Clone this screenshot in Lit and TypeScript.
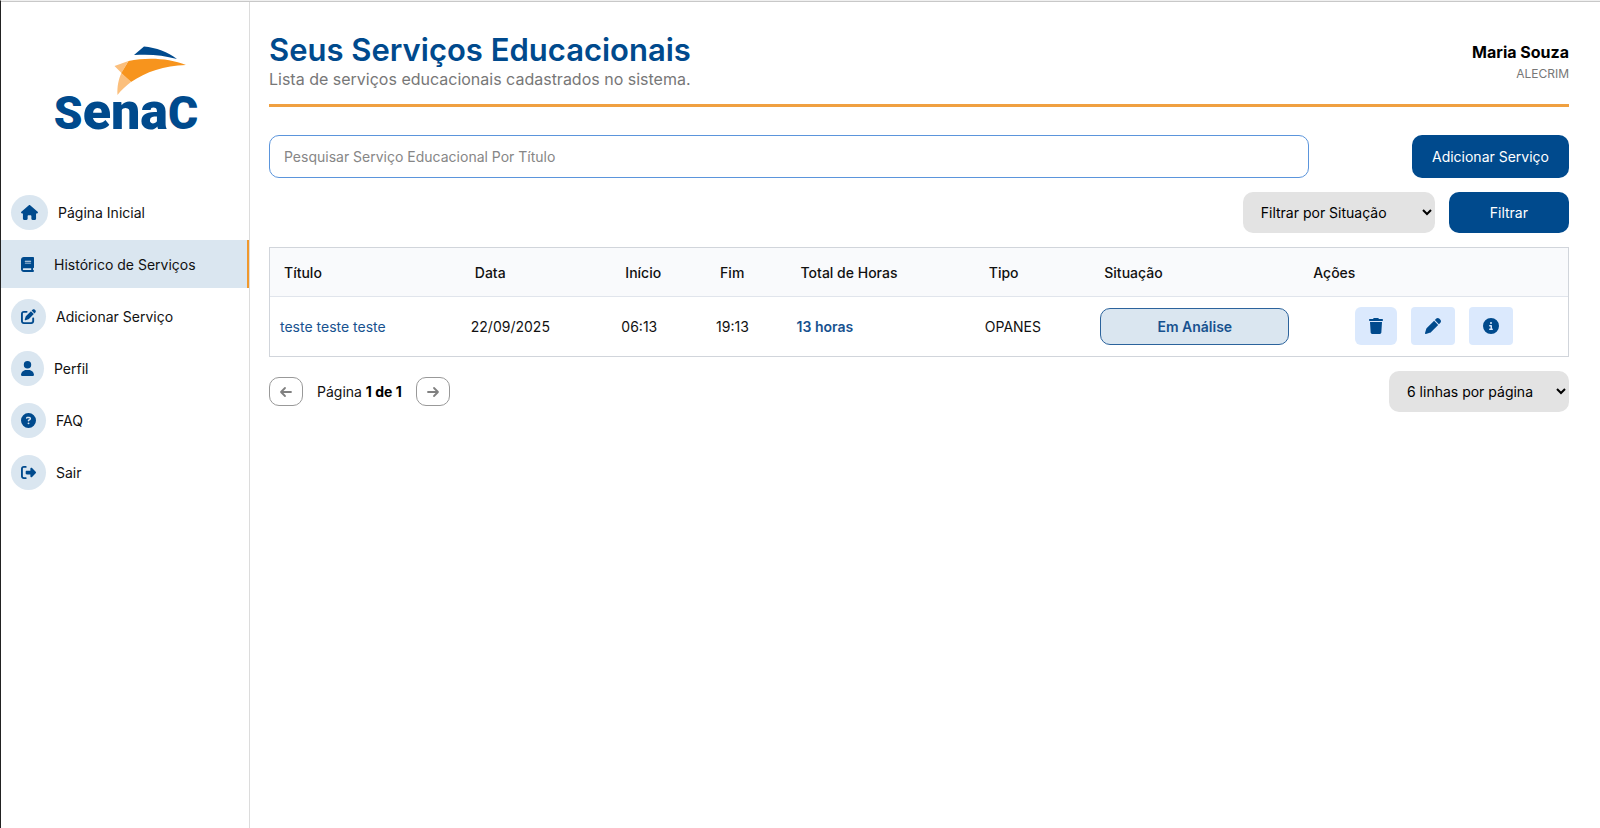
import { LitElement, html, svg, css } from "lit";
import { customElement, property, state } from "lit/decorators.js";

type Icon = { w: number; d: string };

const icons: Record<string, Icon> = {
  home: { w: 576, d: "M575.8 255.5c0 18-15 32.1-32 32.1l-32 0 .7 160.2c0 2.7-.2 5.4-.5 8.1l0 16.2c0 22.1-17.9 40-40 40l-16 0c-1.1 0-2.2 0-3.3-.1c-1.4 .1-2.8 .1-4.2 .1L416 512l-24 0c-22.1 0-40-17.9-40-40l0-24 0-64c0-17.7-14.3-32-32-32l-64 0c-17.7 0-32 14.3-32 32l0 64 0 24c0 22.1-17.9 40-40 40l-24 0-31.9 0c-1.5 0-3-.1-4.5-.2c-1.2 .1-2.4 .2-3.6 .2l-16 0c-22.1 0-40-17.9-40-40l0-112c0-.9 0-1.9 .1-2.8l0-69.7-32 0c-18 0-32-14-32-32.1c0-9 3-17 10-24L266.4 8c7-7 15-8 22-8s15 2 21 7L564.8 231.5c8 7 12 15 11 24z" },
  book: { w: 448, d: "M96 0C43 0 0 43 0 96L0 416c0 53 43 96 96 96l288 0 32 0c17.7 0 32-14.3 32-32s-14.3-32-32-32l0-64c17.7 0 32-14.3 32-32l0-320c0-17.7-14.3-32-32-32L384 0 96 0zm0 384l256 0 0 64L96 448c-17.7 0-32-14.3-32-32s14.3-32 32-32zm32-240c0-8.8 7.2-16 16-16l192 0c8.8 0 16 7.2 16 16s-7.2 16-16 16l-192 0c-8.8 0-16-7.2-16-16zm16 48l192 0c8.8 0 16 7.2 16 16s-7.2 16-16 16l-192 0c-8.8 0-16-7.2-16-16s7.2-16 16-16z" },
  edit: { w: 512, d: "M471.6 21.7c-21.9-21.9-57.3-21.9-79.2 0L362.3 51.7l97.9 97.9 30.1-30.1c21.9-21.9 21.9-57.3 0-79.2L471.6 21.7zm-299.2 220c-6.1 6.1-10.8 13.6-13.5 21.9l-29.6 88.8c-2.9 8.6-.6 18.1 5.8 24.6s15.9 8.7 24.6 5.8l88.8-29.6c8.2-2.7 15.7-7.4 21.9-13.5L437.7 172.3 339.7 74.3 172.4 241.7zM96 64C43 64 0 107 0 160L0 416c0 53 43 96 96 96l256 0c53 0 96-43 96-96l0-96c0-17.7-14.3-32-32-32s-32 14.3-32 32l0 96c0 17.7-14.3 32-32 32L96 448c-17.7 0-32-14.3-32-32l0-256c0-17.7 14.3-32 32-32l96 0c17.7 0 32-14.3 32-32s-14.3-32-32-32L96 64z" },
  user: { w: 448, d: "M224 256A128 128 0 1 0 224 0a128 128 0 1 0 0 256zm-45.7 48C79.8 304 0 383.8 0 482.3C0 498.7 13.3 512 29.7 512l388.6 0c16.4 0 29.7-13.3 29.7-29.7C448 383.8 368.2 304 269.7 304l-91.4 0z" },
  question: { w: 512, d: "M256 512A256 256 0 1 0 256 0a256 256 0 1 0 0 512zM169.8 165.3c7.9-22.3 29.1-37.3 52.8-37.3l58.3 0c34.9 0 63.1 28.3 63.1 63.1c0 22.6-12.1 43.5-31.7 54.8L280 264.4c-.2 13-10.9 23.6-24 23.6c-13.3 0-24-10.7-24-24l0-13.5c0-8.6 4.6-16.5 12.1-20.8l44.3-25.4c4.7-2.7 7.6-7.7 7.6-13.1c0-8.4-6.8-15.1-15.1-15.1l-58.3 0c-3.4 0-6.4 2.1-7.5 5.3l-.4 1.2c-4.4 12.5-18.2 19-30.6 14.6s-19-18.2-14.6-30.6l.4-1.2zM224 352a32 32 0 1 1 64 0 32 32 0 1 1 -64 0z" },
  exit: { w: 512, d: "M377.9 105.9L500.7 228.7c7.2 7.2 11.3 17.1 11.3 27.3s-4.1 20.1-11.3 27.3L377.9 406.1c-6.4 6.4-15 9.9-24 9.9c-18.7 0-33.9-15.2-33.9-33.9l0-62.1-128 0c-17.7 0-32-14.3-32-32l0-64c0-17.7 14.3-32 32-32l128 0 0-62.1c0-18.7 15.2-33.9 33.9-33.9c9 0 17.6 3.6 24 9.9zM160 96L96 96c-17.7 0-32 14.3-32 32l0 256c0 17.7 14.3 32 32 32l64 0c17.7 0 32 14.3 32 32s-14.3 32-32 32l-64 0c-53 0-96-43-96-96L0 128C0 75 43 32 96 32l64 0c17.7 0 32 14.3 32 32s-14.3 32-32 32z" },
  trash: { w: 448, d: "M135.2 17.7L128 32 32 32C14.3 32 0 46.3 0 64S14.3 96 32 96l384 0c17.7 0 32-14.3 32-32s-14.3-32-32-32l-96 0-7.2-14.3C307.4 6.8 296.3 0 284.2 0L163.8 0c-12.1 0-23.2 6.8-28.6 17.7zM416 128L32 128 53.2 467c1.6 25.3 22.6 45 47.9 45l245.8 0c25.3 0 46.3-19.7 47.9-45L416 128z" },
  pen: { w: 512, d: "M362.7 19.3L314.3 67.7 444.3 197.7l48.4-48.4c25-25 25-65.5 0-90.5L453.3 19.3c-25-25-65.5-25-90.5 0zm-71 71L58.6 323.5c-10.4 10.4-18 23.3-22.2 37.4L1 481.2C-1.5 489.7 .8 498.8 7 505s15.3 8.5 23.7 6.1l120.3-35.4c14.1-4.2 27-11.8 37.4-22.2L421.7 220.3 291.7 90.3z" },
  info: { w: 512, d: "M256 512A256 256 0 1 0 256 0a256 256 0 1 0 0 512zM216 336l24 0 0-64-24 0c-13.3 0-24-10.7-24-24s10.7-24 24-24l48 0c13.3 0 24 10.7 24 24l0 88 8 0c13.3 0 24 10.7 24 24s-10.7 24-24 24l-80 0c-13.3 0-24-10.7-24-24s10.7-24 24-24zm40-208a32 32 0 1 1 0 64 32 32 0 1 1 0-64z" },
};

const glyph = (name: string, size: number) => {
  const { w, d } = icons[name];
  return html`<svg aria-hidden="true" width=${Math.round((size * w) / 512)} height=${size} viewBox="0 0 ${w} 512" fill="currentColor">${svg`<path d=${d}></path>`}</svg>`;
};

@customElement("side-bar")
export class SideBar extends LitElement {
  @property() active = "";

  static styles = css`
    :host {
      display: block;
      border-right: 1px solid #dcdcdc;
    }
    .brand {
      display: block;
      padding: 36px 0 36px 44px;
    }
    .brand svg {
      display: block;
    }
    .wordmark {
      font-family: Roboto, "Liberation Sans", sans-serif;
      font-size: 52px;
      font-weight: 900;
      fill: #004a8d;
    }
    .cap {
      font-size: 46px;
    }
    ul {
      list-style: none;
      margin: 0;
      padding: 0;
      display: grid;
      gap: 4px;
    }
    .item {
      display: flex;
      align-items: center;
      gap: 10px;
      min-height: 48px;
      padding: 0 10px;
      box-sizing: border-box;
      color: #111;
      text-decoration: none;
      font-size: 14px;
    }
    .item.active {
      background: #dae6f0;
      border-right: 2px solid #f0982c;
    }
    .bubble {
      display: flex;
      padding: 10px;
      border-radius: 50%;
      background: #dae6f0;
      color: #004a8d;
    }
  `;

  private items = [
    ["Página Inicial", "home"],
    ["Histórico de Serviços", "book"],
    ["Adicionar Serviço", "edit"],
    ["Perfil", "user"],
    ["FAQ", "question"],
    ["Sair", "exit"],
  ];

  render() {
    return html`
      <a class="brand" href="#" aria-label="Senac">
        <svg width="160" height="114" viewBox="44 38 160 114">
          <path fill="#004a8d" d="M133 55L143 46.500C155 47.500 167 52 176 59C162 55 149 54 133 55Z"></path>
          <path fill="#f7941d" d="M127.500 61C146 57 168 58 185 65C163 65.500 145 72 130 82L120 73Z"></path>
          <path fill="#fbbf7c" d="M113.500 66L127.500 61L120.500 73Z"></path>
          <path fill="#fbbf7c" d="M120.500 73L130 82C125 86 120 90 116.500 95C116 87 117.500 79 120.500 73Z"></path>
          <text class="wordmark" x="125" y="129" text-anchor="middle"><tspan class="cap">S</tspan>ena<tspan class="cap">C</tspan></text>
        </svg>
      </a>
      <nav>
        <ul>
          ${this.items.map(
            ([label, icon]) => html`<li>
              <a class="item ${label === this.active ? "active" : ""}" href="#">
                <span class="bubble">${glyph(icon, 15)}</span>${label}
              </a>
            </li>`
          )}
        </ul>
      </nav>
    `;
  }
}

@customElement("app-root")
export class AppRoot extends LitElement {
  @state() private rows = [
    { title: "teste teste teste", date: "22/09/2025", start: "06:13", end: "19:13", hours: "13 horas", kind: "OPANES", status: "Em Análise" },
  ];

  static styles = css`
    :host {
      display: grid;
      grid-template-columns: 249px minmax(0, 1fr);
      min-height: 100vh;
      box-sizing: border-box;
      border-left: 1px solid #222;
      border-top: 1px solid #f0f0f0;
      padding-top: 1px;
      box-shadow: inset 0 1px #c8c8c8;
      background: #fff;
      color: #111;
      font-family: Inter, "Liberation Sans", sans-serif;
      font-size: 14px;
      line-height: 17px;
    }
    main {
      padding: 29px 31px 29px 19px;
    }
    header {
      display: flex;
      justify-content: space-between;
      align-items: center;
      padding-bottom: 15px;
      border-bottom: 3px solid #f0a040;
      margin-bottom: 28px;
    }
    h1 {
      margin: 0;
      font-size: 31px;
      line-height: 38px;
      font-weight: 600;
      color: #004a8d;
    }
    .subtitle {
      margin: 0;
      font-size: 16px;
      line-height: 20px;
      color: #777;
    }
    .account {
      text-align: right;
      padding-top: 6px;
    }
    .name {
      margin: 0;
      font-size: 16px;
      line-height: 21px;
      font-weight: 700;
      color: #000;
    }
    .unit {
      margin: 0;
      font-size: 12px;
      line-height: 21px;
      color: #777;
    }
    input,
    select,
    button {
      font: inherit;
      box-sizing: border-box;
    }
    .row {
      display: flex;
      justify-content: space-between;
      align-items: center;
      margin-bottom: 14px;
    }
    .filters {
      justify-content: flex-end;
      gap: 14px;
    }
    .search {
      width: 80%;
      padding: 12px 14px;
      border: 1px solid #5b95dc;
      border-radius: 10px;
      background: #fff;
      color: #111;
    }
    .search::placeholder {
      color: #868686;
    }
    .primary {
      border: 0;
      border-radius: 10px;
      background: #004a8d;
      color: #fff;
      padding: 12px 41px;
    }
    .tall {
      padding: 13px 20px;
    }
    .select {
      height: 41px;
      border: 0;
      border-radius: 10px;
      background: #e3e3e3;
      color: #000;
      padding: 0 14px;
    }
    .situation {
      width: 192px;
    }
    .size {
      width: 180px;
    }
    table {
      width: 100%;
      table-layout: fixed;
      border-collapse: separate;
      border-spacing: 0;
      border: 1px solid #d1d5db;
      margin-bottom: 14px;
    }
    th,
    td {
      box-sizing: border-box;
    }
    th {
      padding: 16px 14px 15px;
      text-align: left;
      font-weight: 500;
      background: #f9fafc;
      border-bottom: 1px solid #e1e5ec;
    }
    td {
      padding: 10px 10px 11px;
    }
    .c-title { width: 14.7%; }
    .c-date { width: 11.6%; }
    .c-start { width: 7.3%; }
    .c-end { width: 6.2%; }
    .c-hours { width: 14.5%; }
    .c-kind { width: 8.9%; }
    .c-status { width: 16.1%; }
    .title {
      color: #17528f;
      text-decoration: none;
    }
    .hours {
      color: #17528f;
      font-weight: 600;
    }
    .status {
      display: block;
      padding: 9px;
      border: 1px solid #2b639c;
      border-radius: 10px;
      background: #dae6f0;
      color: #17528f;
      font-weight: 600;
      text-align: center;
    }
    .actions {
      display: flex;
      justify-content: center;
      gap: 14px;
    }
    .action {
      display: flex;
      border: 0;
      border-radius: 4px;
      padding: 11px 14px;
      background: #dbe9fd;
      color: #004a8d;
    }
    .action.round {
      border-radius: 6px;
    }
    .pager {
      display: flex;
      align-items: center;
      gap: 14px;
    }
    .page {
      display: grid;
      place-items: center;
      width: 34px;
      height: 29px;
      padding: 0;
      border: 1px solid #999;
      border-radius: 10px;
      background: #fff;
    }
    b {
      color: #000;
    }
  `;

  private arrow(d: string) {
    return html`<svg aria-hidden="true" width="14" height="12" viewBox="0 0 14 12" fill="none" stroke="#808080" stroke-width="1.800" stroke-linecap="round" stroke-linejoin="round"><path d=${d}></path></svg>`;
  }

  render() {
    return html`
      <side-bar active="Histórico de Serviços"></side-bar>
      <main>
        <header>
          <div>
            <h1>Seus Serviços Educacionais</h1>
            <p class="subtitle">Lista de serviços educacionais cadastrados no sistema.</p>
          </div>
          <div class="account">
            <p class="name">Maria Souza</p>
            <p class="unit">ALECRIM</p>
          </div>
        </header>
        <div class="row">
          <input class="search" type="text" aria-label="Pesquisar serviço" placeholder="Pesquisar Serviço Educacional Por Título" />
          <button class="primary tall" type="button">Adicionar Serviço</button>
        </div>
        <div class="row filters">
          <select class="select situation" aria-label="Situação">
            <option>Filtrar por Situação</option>
          </select>
          <button class="primary" type="button">Filtrar</button>
        </div>
        <table>
          <thead>
            <tr>
              <th class="c-title">Título</th>
              <th class="c-date">Data</th>
              <th class="c-start">Início</th>
              <th class="c-end">Fim</th>
              <th class="c-hours">Total de Horas</th>
              <th class="c-kind">Tipo</th>
              <th class="c-status">Situação</th>
              <th>Ações</th>
            </tr>
          </thead>
          <tbody>
            ${this.rows.map(
              (r) => html`<tr>
                <td><a class="title" href="#">${r.title}</a></td>
                <td>${r.date}</td>
                <td>${r.start}</td>
                <td>${r.end}</td>
                <td class="hours">${r.hours}</td>
                <td>${r.kind}</td>
                <td><span class="status">${r.status}</span></td>
                <td>
                  <div class="actions">
                    <button class="action round" type="button" aria-label="Excluir">${glyph("trash", 16)}</button>
                    <button class="action" type="button" aria-label="Editar">${glyph("pen", 16)}</button>
                    <button class="action" type="button" aria-label="Detalhes">${glyph("info", 16)}</button>
                  </div>
                </td>
              </tr>`
            )}
          </tbody>
        </table>
        <div class="row">
          <div class="pager">
            <button class="page" type="button" aria-label="Página anterior">${this.arrow("M12 6H2M6 2L2 6L6 10")}</button>
            <span>Página <b>1 de 1</b></span>
            <button class="page" type="button" aria-label="Próxima página">${this.arrow("M2 6H12M8 2L12 6L8 10")}</button>
          </div>
          <select class="select size" aria-label="Linhas por página">
            <option>6 linhas por página</option>
          </select>
        </div>
      </main>
    `;
  }
}
